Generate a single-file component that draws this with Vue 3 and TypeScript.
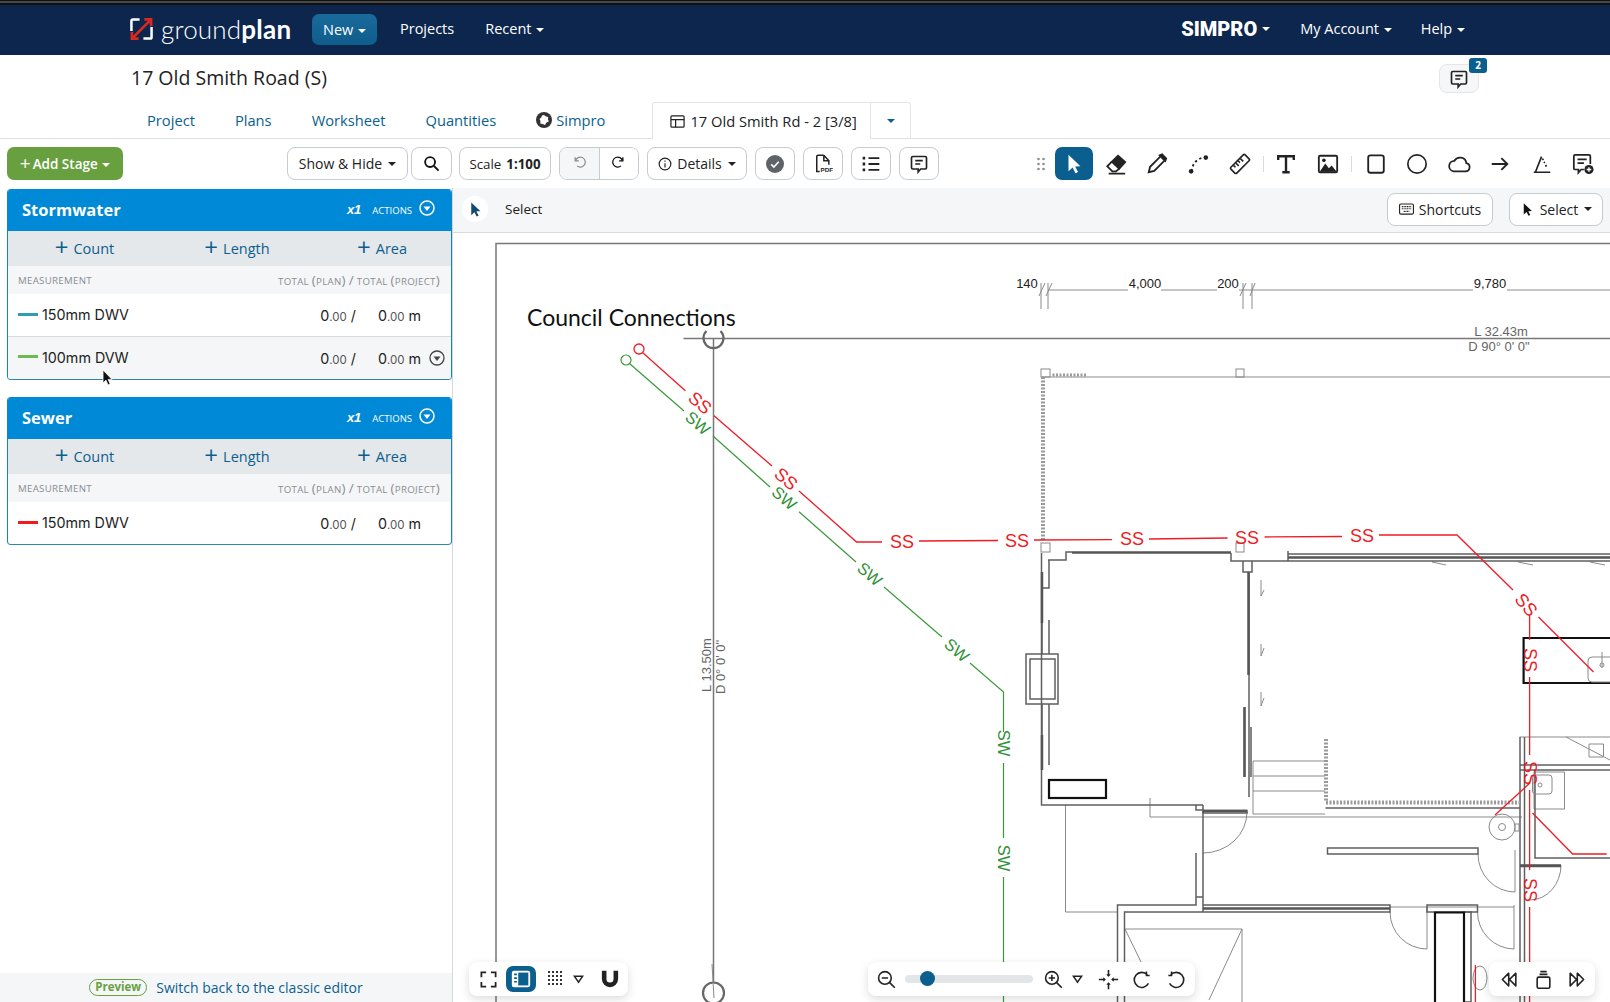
<script setup lang="ts">
interface Stage {
  name: string;
  rows: { name: string; color: string; hover?: boolean }[];
}
interface Label {
  t: string;
  x: number;
  y: number;
  r: number;
}

const tabs = ['Project', 'Plans', 'Worksheet', 'Quantities'];

const stages: Stage[] = [
  {
    name: 'Stormwater',
    rows: [
      { name: '150mm DWV', color: '#2f9bb5' },
      { name: '100mm DVW', color: '#6dbb4f', hover: true },
    ],
  },
  { name: 'Sewer', rows: [{ name: '150mm DWV', color: '#f01c1c' }] },
];

const redLines = [
  'M642.5 352.5L685.4 390.7',
  'M714 415.7L772 466',
  'M799 491L856.6 542H882',
  'M919 541L998 540.5',
  'M1034 540L1112 539.6',
  'M1149 539L1227.6 538',
  'M1264.6 537L1342 536.5',
  'M1379 535H1457L1513 590',
  'M1538.5 617L1593.5 672',
  'M1529.6 615V640',
  'M1529.6 677V755',
  'M1529.6 790V870',
  'M1529.6 907V1002',
  'M1495 815L1530 783',
  'M1532.5 813L1572.6 854H1606.7',
  'M1475.4 965V1002',
];
const greenLines = [
  'M629.5 363.5L684 411',
  'M713 436L770 487',
  'M799 511.7L856 562',
  'M884 587L942 637',
  'M970 663L1003.5 692V732',
  'M1003.5 763V838',
  'M1003.5 877V1002',
];
const ssLabels: Label[] = [
  { t: 'SS', x: 700, y: 403, r: 41 },
  { t: 'SS', x: 786, y: 479, r: 41 },
  { t: 'SS', x: 902, y: 542, r: 0 },
  { t: 'SS', x: 1017, y: 541, r: 0 },
  { t: 'SS', x: 1132, y: 539, r: 0 },
  { t: 'SS', x: 1247, y: 538, r: 0 },
  { t: 'SS', x: 1362, y: 536, r: 0 },
  { t: 'SS', x: 1526, y: 605, r: 50 },
  { t: 'SS', x: 1529.5, y: 660, r: 90 },
  { t: 'SS', x: 1529.5, y: 773, r: 90 },
  { t: 'SS', x: 1529.5, y: 890, r: 90 },
];
const swLabels: Label[] = [
  { t: 'SW', x: 698, y: 423, r: 41 },
  { t: 'SW', x: 784.5, y: 498, r: 41 },
  { t: 'SW', x: 870, y: 574, r: 41 },
  { t: 'SW', x: 957, y: 650, r: 41 },
  { t: 'SW', x: 1003.5, y: 743, r: 90 },
  { t: 'SW', x: 1003.5, y: 858, r: 90 },
];
</script>

<template>
  <div class="app">
    <div class="strip"></div>
    <nav class="nav">
      <svg class="logo" viewBox="0 0 24 24" width="23" height="24">
        <path d="M10 2H3a1.500 1.500 0 0 0-1.500 1.500V14M14 22h7a1.500 1.500 0 0 0 1.500-1.500V10" fill="none" stroke="#fff" stroke-width="2.600" />
        <path d="M2 22L22 2M2 15v7h7M15 2h7v7" fill="none" stroke="#d9281e" stroke-width="2.800" />
      </svg>
      <span class="brand">ground<b>plan</b></span>
      <button class="nav__new">New <i class="caret"></i></button>
      <a class="nav__link nav__link--projects">Projects</a>
      <a class="nav__link nav__link--recent">Recent <i class="caret"></i></a>
      <span class="simpro">SIMPRO</span><i class="caret caret--simpro"></i>
      <a class="nav__link nav__link--account">My Account <i class="caret"></i></a>
      <a class="nav__link nav__link--help">Help <i class="caret"></i></a>
    </nav>

    <header class="head">
      <div class="head__top">
        <h1 class="head__title">17 Old Smith Road (S)</h1>
        <button class="chat">
          <svg viewBox="0 0 24 24" width="20" height="20" fill="none" stroke="#222" stroke-width="2">
            <path d="M4.500 3h15a1.500 1.500 0 0 1 1.500 1.500v12a1.500 1.500 0 0 1-1.500 1.500H14l-3 3.500V18H4.500A1.500 1.500 0 0 1 3 16.500v-12A1.500 1.500 0 0 1 4.500 3zM7.500 8h9M7.500 12h6" />
          </svg>
          <span class="chat__badge">2</span>
        </button>
      </div>
      <div class="tabs">
        <a v-for="t in tabs" :key="t" class="tabs__item">{{ t }}</a>
        <a class="tabs__item tabs__item--simpro">
          <svg viewBox="0 0 16 16" width="16" height="16">
            <circle cx="8" cy="8" r="8" fill="#333" />
            <path d="M8 3l2 1.500 2.200.5-.2 2.500.8 2-2.300 1L9 13 6.500 12l-2.300-.5.3-2.500L3.500 7l1.800-1.500L6 3.500z" fill="#fff" />
          </svg>
          Simpro
        </a>
        <div class="plan-tab">
          <div class="plan-tab__name">
            <svg viewBox="0 0 16 16" width="15" height="15" fill="none" stroke="#222" stroke-width="1.300">
              <rect x="1" y="2" width="14" height="12" rx="1" />
              <path d="M1 6h14M6 6v8" />
            </svg>
            17 Old Smith Rd - 2 [3/8]
          </div>
          <div class="plan-tab__more"><i class="caret caret--blue"></i></div>
        </div>
      </div>
    </header>

    <div class="toolbar">
      <button class="add-stage"><span class="add-stage__plus">+</span>Add Stage <i class="caret"></i></button>
      <button class="tbtn tbtn--show">Show &amp; Hide <i class="caret caret--dark"></i></button>
      <button class="tbtn tbtn--search">
        <svg viewBox="0 0 24 24" width="17" height="17" fill="none" stroke="#111" stroke-width="2.600">
          <circle cx="10" cy="10" r="7" />
          <path d="M15.500 15.500L22 22" />
        </svg>
      </button>
      <button class="tbtn tbtn--scale">Scale <b>1:100</b></button>
      <div class="tgroup">
        <button class="tgroup__btn tgroup__btn--off">
          <svg viewBox="0 0 24 24" width="15" height="15" fill="none" stroke="#8b8f94" stroke-width="2">
            <path d="M5 5v6h6M5.500 11A8 8 0 1 1 8 19" />
          </svg>
        </button>
        <button class="tgroup__btn">
          <svg viewBox="0 0 24 24" width="15" height="15" fill="none" stroke="#111" stroke-width="2">
            <path d="M19 5v6h-6M18.500 11A8 8 0 1 0 16 19" />
          </svg>
        </button>
      </div>
      <button class="tbtn tbtn--details">
        <svg viewBox="0 0 24 24" width="14" height="14" fill="none" stroke="#222" stroke-width="2">
          <circle cx="12" cy="12" r="10" />
          <path d="M12 10.500V18M12 6v2" />
        </svg>
        Details <i class="caret caret--dark"></i>
      </button>
      <button class="tbtn tbtn--icon tbtn--check">
        <svg viewBox="0 0 24 24" width="18" height="18">
          <circle cx="12" cy="12" r="12" fill="#5f6368" />
          <path d="M7 12.500l3.500 3.500L17 9" fill="none" stroke="#fff" stroke-width="2.200" />
        </svg>
      </button>
      <button class="tbtn tbtn--icon tbtn--pdf">
        <svg viewBox="0 0 24 24" width="20" height="22" fill="none" stroke="#222" stroke-width="1.800">
          <path d="M13 1.500H6A1.500 1.500 0 0 0 4.500 3v18H8" />
          <path d="M13 1.500V8h6v5M13 1.500L19 8" />
          <text x="9" y="22" class="pdf-text">PDF</text>
        </svg>
      </button>
      <button class="tbtn tbtn--icon tbtn--list">
        <svg viewBox="0 0 24 24" width="20" height="20" fill="none" stroke="#222" stroke-width="2.200">
          <path d="M9 5h13M9 12h13M9 19h13" />
          <path d="M2 5h3M2 12h3M2 19h3" stroke-width="3.400" />
        </svg>
      </button>
      <button class="tbtn tbtn--icon tbtn--note">
        <svg viewBox="0 0 24 24" width="20" height="20" fill="none" stroke="#222" stroke-width="2">
          <path d="M4.500 3h15a1.500 1.500 0 0 1 1.500 1.500v12a1.500 1.500 0 0 1-1.500 1.500H14l-3 3.500V18H4.500A1.500 1.500 0 0 1 3 16.500v-12A1.500 1.500 0 0 1 4.500 3zM7.500 8h9M7.500 12h6" />
        </svg>
      </button>

      <div class="tools">
        <svg class="tools__drag" viewBox="0 0 8 14" width="8" height="14" fill="#8a8f94">
          <circle cx="1.500" cy="2" r="1.300" /><circle cx="6.500" cy="2" r="1.300" />
          <circle cx="1.500" cy="7" r="1.300" /><circle cx="6.500" cy="7" r="1.300" />
          <circle cx="1.500" cy="12" r="1.300" /><circle cx="6.500" cy="12" r="1.300" />
        </svg>
        <button class="tool tool--active">
          <svg viewBox="0 0 24 24" width="24" height="24" fill="#fff"><path d="M6 2v18l4.500-4.200 3.100 6.200 2.800-1.300-3.100-6.100 5.700-.2z" /></svg>
        </button>
        <button class="tool">
          <svg viewBox="0 0 24 24" fill="none" stroke="#222" stroke-width="2">
            <path d="M14.200 3L22 10l-6.500 7-8-7.500z" fill="#222" />
            <path d="M7.500 9.500l-5 5L8 20h4l3.500-3M4 22.500h18" />
          </svg>
        </button>
        <button class="tool">
          <svg viewBox="0 0 24 24" fill="none" stroke="#222" stroke-width="2">
            <path d="M3 21l1.500-6L16 3.500 20.500 8 9 19.500z" />
            <path d="M15 2.500l2.500-1L22 6l-1 2.500z" fill="#222" />
          </svg>
        </button>
        <button class="tool">
          <svg viewBox="0 0 24 24" fill="none" stroke="#222" stroke-width="2">
            <path d="M5 20C6 11 11 6 19 5" stroke-dasharray="2.500 3" />
            <circle cx="4.500" cy="20" r="2.500" fill="#222" stroke="none" />
            <circle cx="20.500" cy="5" r="2.500" fill="#222" stroke="none" />
          </svg>
        </button>
        <button class="tool">
          <svg viewBox="0 0 24 24" fill="none" stroke="#222" stroke-width="1.800">
            <g transform="rotate(-45 12 12)">
              <rect x="1" y="7.500" width="22" height="9" rx="1.500" />
              <path d="M6 8v3M9.500 8v4.500M13 8v3M16.500 8v4.500" />
            </g>
          </svg>
        </button>
        <i class="tools__sep tools__sep--a"></i>
        <button class="tool">
          <svg viewBox="0 0 24 24" fill="none" stroke="#222" stroke-width="2.600">
            <path d="M3.500 7.500V3.500h17v4M12 3.500V21M8 21h8" />
          </svg>
        </button>
        <button class="tool">
          <svg viewBox="0 0 24 24" fill="none" stroke="#222" stroke-width="2">
            <rect x="2" y="3" width="20" height="18" rx="1.500" />
            <path d="M3 20.500l6-9 4 5 3-3 5.500 7z" fill="#222" stroke="none" />
            <circle cx="7.500" cy="8" r="2" fill="#222" stroke="none" />
          </svg>
        </button>
        <i class="tools__sep tools__sep--b"></i>
        <button class="tool">
          <svg viewBox="0 0 24 24" fill="none" stroke="#222" stroke-width="2"><rect x="3.500" y="2.500" width="17" height="19" rx="2.500" /></svg>
        </button>
        <button class="tool">
          <svg viewBox="0 0 24 24" fill="none" stroke="#222" stroke-width="1.800"><circle cx="12" cy="12" r="10" /></svg>
        </button>
        <button class="tool">
          <svg class="tool__wide" viewBox="0 0 26 24" fill="none" stroke="#222" stroke-width="1.900">
            <path d="M7 20h13a4.500 4.500 0 0 0 1-8.900A7 7 0 0 0 8 8.500 5.800 5.800 0 0 0 7 20z" />
          </svg>
        </button>
        <button class="tool">
          <svg viewBox="0 0 24 24" fill="none" stroke="#222" stroke-width="2"><path d="M3 12h17M13.500 5.500L20 12l-6.500 6.500" /></svg>
        </button>
        <button class="tool">
          <svg viewBox="0 0 24 24" fill="none" stroke="#222" stroke-width="1.800">
            <path d="M3 21h18M5 20.500L11.500 4" />
            <path d="M12.500 6l2.500 5M16 13l1 2.500" stroke-dasharray="2 2" />
          </svg>
        </button>
        <button class="tool">
          <svg viewBox="0 0 24 24" fill="none" stroke="#222" stroke-width="1.900">
            <path d="M13 18H10l-3 3.500V18H3.500A1.500 1.500 0 0 1 2 16.500v-13A1.500 1.500 0 0 1 3.500 2h15A1.500 1.500 0 0 1 20 3.500V12M6 7h10M6 11h7" />
            <circle cx="18.500" cy="18" r="5" fill="#222" stroke="none" />
            <path d="M18.500 15.500v5M16 18h5" stroke="#fff" stroke-width="1.500" />
          </svg>
        </button>
      </div>
    </div>

    <div class="main">
      <aside class="side">
        <div class="side__stages">
          <section v-for="s in stages" :key="s.name" class="stage">
            <div class="stage__head">
              <span class="stage__name">{{ s.name }}</span>
              <em class="stage__qty">x1</em>
              <span class="stage__actions">ACTIONS</span>
              <svg class="stage__chev" viewBox="0 0 16 16" width="16" height="16" fill="none" stroke="#fff" stroke-width="1.500">
                <circle cx="8" cy="8" r="7" />
                <path d="M4.500 6.500h7L8 11z" fill="#fff" stroke="none" />
              </svg>
            </div>
            <div class="stage__add">
              <a class="stage__addbtn"><span class="stage__plus">+</span>Count</a>
              <a class="stage__addbtn"><span class="stage__plus">+</span>Length</a>
              <a class="stage__addbtn"><span class="stage__plus">+</span>Area</a>
            </div>
            <div class="stage__cols">
              <span>MEASUREMENT</span>
              <span>TOTAL <span class="stage__paren">(</span>PLAN<span class="stage__paren">)</span> <span class="stage__paren">/</span> TOTAL <span class="stage__paren">(</span>PROJECT<span class="stage__paren">)</span></span>
            </div>
            <div v-for="r in s.rows" :key="r.name" class="row" :class="{ 'row--hover': r.hover }">
              <i class="row__swatch" :style="{ background: r.color }"></i>
              <span class="row__name">{{ r.name }}</span>
              <span class="row__plan">0<small>.00</small> /</span>
              <span class="row__project">0<small>.00</small> m</span>
              <span class="row__act">
                <svg v-if="r.hover" viewBox="0 0 16 16" width="16" height="16" fill="none" stroke="#444" stroke-width="1.300">
                  <circle cx="8" cy="8" r="7" />
                  <path d="M4.500 6.500h7L8 11z" fill="#444" stroke="none" />
                </svg>
              </span>
            </div>
          </section>
        </div>
        <div class="side__foot">
          <span class="pill">Preview</span>
          <a class="side__back">Switch back to the classic editor</a>
        </div>
        <svg class="mouse" viewBox="0 0 12 18" width="12" height="18">
          <path d="M1 1v13l3-2.800 2 4.800 2.200-1-2-4.600H10z" fill="#111" stroke="#fff" stroke-width=".8" />
        </svg>
      </aside>

      <div class="work">
        <div class="work__bar">
          <span class="work__round">
            <svg viewBox="0 0 24 24" width="17" height="17" fill="#14496f"><path d="M6 2v18l4.500-4.200 3.100 6.200 2.800-1.300-3.100-6.100 5.700-.2z" /></svg>
          </span>
          <span class="work__mode">Select</span>
          <button class="tbtn tbtn--shortcuts">
            <svg viewBox="0 0 16 12" width="15" height="12" fill="none" stroke="#222" stroke-width="1.200">
              <rect x=".6" y=".6" width="14.800" height="10.800" rx="1.500" />
              <path d="M3 3.500h10M3 5.700h10M5 8.500h6" stroke-dasharray="1.200 .6" />
            </svg>
            Shortcuts
          </button>
          <button class="tbtn tbtn--select">
            <svg viewBox="0 0 24 24" width="15" height="15" fill="#111"><path d="M6 2v18l4.500-4.200 3.100 6.200 2.800-1.300-3.100-6.100 5.700-.2z" /></svg>
            Select <i class="caret caret--dark"></i>
          </button>
        </div>

        <div class="canvas">
          <svg class="plan" viewBox="453 233 1157 769" width="1157" height="769">
            <g class="d-sheet">
              <path d="M496 1002V243.500H1610" />
              <path d="M683.500 338.500H1610M713.500 338.500V982" />
              <path class="d-ring" d="M706.500 331A10 10 0 1 0 720.500 331" />
              <circle class="d-ring" cx="713.500" cy="993" r="10.500" />
              <path d="M712 964L714 998" class="d-thin" />
            </g>
            <text x="527" y="326" class="t-council">Council Connections</text>
            <text x="1501" y="336" class="t-sur">L 32.43m</text>
            <text x="1499" y="351" class="t-sur">D 90° 0' 0"</text>
            <text transform="rotate(-90 706 665)" x="706" y="670" class="t-sur">L 13.50m</text>
            <text transform="rotate(-90 720 667)" x="720" y="672" class="t-sur">D 0° 0' 0"</text>

            <g class="d-thin">
              <path d="M1048 290H1128M1161 290H1217M1239 290H1473M1507 290H1610" />
              <path d="M1041 283V309M1048 283V309M1243 283V309M1252 283V309" />
              <path d="M1039 296L1045 283M1046 296L1052 283M1240 296L1246 283M1250 296L1255 283" />
            </g>
            <text x="1027" y="288" class="t-dim">140</text>
            <text x="1145" y="288" class="t-dim">4,000</text>
            <text x="1228" y="288" class="t-dim">200</text>
            <text x="1490" y="288" class="t-dim">9,780</text>

            <!-- building -->
            <g class="d-thin">
              <rect x="1041" y="369" width="9" height="8" />
              <rect x="1236" y="369" width="8" height="8" />
              <rect x="1041" y="543" width="9" height="9" />
              <rect x="1236" y="543" width="8" height="9" />
              <path d="M1041 377H1610" />
              <path d="M1150 798V817H1522M1065.500 805V912H1117M1253 761V814H1325M1253 761H1325M1253 776H1325M1253 791H1325" />
              <path d="M1125 929H1242V1002M1125 929L1141 962M1242 929L1209 1000" />
              <path d="M1247 812A44 41 0 0 1 1203 853M1478 854A37 38 0 0 0 1515 892M1515 850V892M1390 912A37 37 0 0 0 1427 949M1427 907V949M1477.500 912A37 37 0 0 0 1514 949M1514 905V949M1561 865A31 35 0 0 1 1530 900" />
              <path d="M1390 907H1514" />
              <path d="M1519.500 737H1610M1566 737L1610 760M1589 744H1603.500V757H1589zM1534 772H1564.500V809H1534z" />
              <path d="M1261 644V656L1264 648M1261 692V706L1264 698M1261 580V596L1264 590M1432 562L1446 565M1518 562L1533 565M1590 562L1605 565" />
            </g>
            <g class="d-wall">
              <path d="M1041.500 553V805H1203M1049 560V588H1041.500M1048 560H1066V552H1072" />
              <path d="M1231 553V561H1288M1243 561V572H1252V561M1249 572V797" />
              <path d="M1288 554H1610M1288 561H1610M1288 551V561" />
              <rect x="1026" y="654" width="32" height="50" />
              <rect x="1030" y="659" width="25" height="40" />
              <path d="M1042 654V620M1049 654V620M1042 704V765M1049 704V765" />
              <path d="M1203 805V912M1196 853V897H1203M1196 897V905H1117.500V1002M1124.500 1002V912H1203" />
              <path d="M1203 905H1390V912H1203M1390 905V912M1427 905H1477.500V912H1427z" />
              <path d="M1196 805V810H1203M1203 810.500H1247V813H1203z" />
              <path d="M1327.500 848H1478V854H1327.500z" />
              <path d="M1520 737V1002M1524.500 737V1002M1535 770V858H1610M1520 765H1610M1520 770H1610M1520 865H1561" />
              <path d="M1244.500 707V777M1251 727V777" />
              <rect x="1464" y="912" width="7" height="90" />
              <path d="M1325.500 808H1520" />
            </g>
            <path class="d-dash" d="M1043 377V540" />
            <path class="d-dash d-dash--small" d="M1052.500 375H1086" />
            <path class="d-dash" d="M1326 739V802" />
            <path class="d-dash" d="M1326 802.500H1520" />
            <g class="d-thick">
              <path d="M1072 552.500H1231M1203 811H1247M1288 557.500H1610M1520 866H1561M1203 908.500H1390M1042 572V623M1042 735V770M1248.500 572V675M1244.500 707V777" />
            </g>
            <g class="d-black">
              <rect x="1049" y="780" width="57" height="18" />
              <path d="M1610 638H1523.600V683H1610" />
              <path d="M1435 1002V912.500H1464V1002" />
            </g>
            <g class="d-thin d-fix">
              <rect x="1588" y="657" width="30" height="25" rx="4" />
              <path d="M1602 652V668" />
              <circle cx="1602" cy="665" r="2" />
              <rect x="1532.500" y="775" width="19.500" height="19" rx="3" />
              <circle cx="1540" cy="785" r="2" />
              <circle cx="1502" cy="827" r="13" />
              <circle cx="1502" cy="827" r="3.500" />
              <rect x="1515" y="824" width="4" height="7" />
              <ellipse cx="1480" cy="978" rx="7" ry="12" />
            </g>

            <g class="d-red">
              <circle cx="639" cy="349" r="5" />
              <path v-for="d in redLines" :key="d" :d="d" />
            </g>
            <g class="d-green">
              <circle cx="626" cy="360" r="5" />
              <path v-for="d in greenLines" :key="d" :d="d" />
            </g>
            <text v-for="l in ssLabels" :key="l.x + '-' + l.y" class="t-ss" :x="l.x" :y="l.y" :transform="`rotate(${l.r} ${l.x} ${l.y})`">{{ l.t }}</text>
            <text v-for="l in swLabels" :key="l.x + '-' + l.y" class="t-sw" :x="l.x" :y="l.y" :transform="`rotate(${l.r} ${l.x} ${l.y})`">{{ l.t }}</text>
          </svg>

          <div class="float float--left">
            <svg class="float__i" viewBox="0 0 24 24" fill="none" stroke="#222" stroke-width="2.200">
              <path d="M9 3H3v6M15 3h6v6M9 21H3v-6M15 21h6v-6" />
            </svg>
            <span class="float__on">
              <svg viewBox="0 0 24 24" width="22" height="22">
                <rect x="2" y="3" width="20" height="18" rx="2.500" fill="#fff" />
                <rect x="9" y="5" width="11" height="14" fill="#0b5f8e" />
                <path d="M4.500 7h3M4.500 11h3M4.500 15h3" stroke="#0b5f8e" stroke-width="1.800" />
              </svg>
            </span>
            <svg class="float__i float__i--grid" viewBox="0 0 18 18" fill="#333">
              <path d="M1 1h2v2H1zM5 1h2v2H5zM9 1h2v2H9zM13 1h2v2h-2zM1 5h2v2H1zM5 5h2v2H5zM9 5h2v2H9zM13 5h2v2h-2zM1 9h2v2H1zM5 9h2v2H5zM9 9h2v2H9zM13 9h2v2h-2zM1 13h2v2H1zM5 13h2v2H5zM9 13h2v2H9zM13 13h2v2h-2z" />
            </svg>
            <svg class="float__tri" viewBox="0 0 12 9" fill="none" stroke="#222" stroke-width="1.600"><path d="M1.500 1h9L6 7.500z" /></svg>
            <svg class="float__i float__i--magnet" viewBox="0 0 24 24" fill="none" stroke="#222" stroke-width="5.500">
              <path d="M5 2v10a7 7 0 0 0 14 0V2" />
            </svg>
          </div>

          <div class="float float--zoom">
            <svg class="float__i" viewBox="0 0 24 24" fill="none" stroke="#222" stroke-width="2">
              <circle cx="10" cy="10" r="8" /><path d="M16 16l6.500 6.500M6 10h8" />
            </svg>
            <div class="slider"><i class="slider__thumb"></i></div>
            <svg class="float__i" viewBox="0 0 24 24" fill="none" stroke="#222" stroke-width="2">
              <circle cx="10" cy="10" r="8" /><path d="M16 16l6.500 6.500M6 10h8M10 6v8" />
            </svg>
            <svg class="float__tri" viewBox="0 0 12 9" fill="none" stroke="#222" stroke-width="1.600"><path d="M1.500 1h9L6 7.500z" /></svg>
            <svg class="float__i float__i--fit" viewBox="0 0 24 24" fill="none" stroke="#222" stroke-width="1.800">
              <path d="M12 1v7M12 16v7M1 12h7M16 12h7" />
              <path d="M9.500 6L12 9l2.500-3zM9.500 18l2.500-3 2.500 3zM6 9.500L9 12l-3 2.500zM18 9.500L15 12l3 2.500z" fill="#222" stroke="none" />
            </svg>
            <svg class="float__i float__i--rot" viewBox="0 0 24 24" fill="none" stroke="#222" stroke-width="2">
              <path d="M18 6a9.500 9.500 0 1 0 1.500 11M17 2v5h4" />
            </svg>
            <svg class="float__i float__i--rot" viewBox="0 0 24 24" fill="none" stroke="#222" stroke-width="2">
              <path d="M6 6a9.500 9.500 0 1 1-1.500 11M7 2v5H3" />
            </svg>
          </div>

          <div class="float float--pages">
            <svg class="float__i" viewBox="0 0 24 24" fill="none" stroke="#222" stroke-width="2" stroke-linejoin="round">
              <path d="M11 4L3 12l8 8zM20 4l-8 8 8 8z" />
            </svg>
            <svg class="float__i" viewBox="0 0 24 24" fill="none" stroke="#222" stroke-width="2">
              <rect x="4" y="9" width="16" height="14" rx="2" />
              <path d="M7 5.500h10M8 2h8" />
            </svg>
            <svg class="float__i" viewBox="0 0 24 24" fill="none" stroke="#222" stroke-width="2" stroke-linejoin="round">
              <path d="M4 4l8 8-8 8zM13 4l8 8-8 8z" />
            </svg>
          </div>
        </div>
      </div>
    </div>
  </div>
</template>

<style scoped>
.app {
  width: 1610px;
  height: 1002px;
  display: flex;
  flex-direction: column;
  overflow: hidden;
  position: relative;
  background: #fff;
  color: #222;
  font-family: "Open Sans", "Liberation Sans", sans-serif;
}

button {
  font-family: inherit;
  cursor: pointer;
}

.strip {
  height: 5px;
  background: linear-gradient(#111 0 1px, #484848 1px 3px, #111 3px);
}

.caret {
  display: inline-block;
  width: 0;
  height: 0;
  margin-left: 1px;
  vertical-align: 2px;
  border-left: 4px solid transparent;
  border-right: 4px solid transparent;
  border-top: 4px solid #fff;
}
.caret--dark {
  border-top-color: #222;
}
.caret--blue {
  border-top-color: #0b5f8e;
}

.nav {
  height: 50px;
  display: flex;
  align-items: center;
  padding: 0 0 3px 130px;
  box-sizing: border-box;
  background: #0d264e;
  color: #fff;
  font-size: 14.5px;
}
.logo {
  margin-right: 8px;
}
.brand {
  width: 151px;
  font-family: Lato, sans-serif;
  font-size: 26px;
  font-weight: 300;
  letter-spacing: 0.2px;
}
.brand b {
  font-weight: 700;
}
.nav__new {
  width: 65px;
  height: 31px;
  margin-top: 1px;
  border: 0;
  border-radius: 7px;
  background: linear-gradient(#1a6a9c, #0e5d8c);
  color: #fff;
  font-size: 14.5px;
  font-weight: 500;
}
.nav__link {
  font-weight: 500;
  white-space: nowrap;
}
.nav__link--projects {
  margin-left: 23px;
}
.nav__link--recent {
  margin-left: 31px;
}
.simpro {
  margin-left: 637px;
  font-family: Roboto, sans-serif;
  font-size: 20px;
  font-weight: 900;
}
.caret--simpro {
  margin-left: 5px;
}
.nav__link--account {
  margin-left: 30px;
}
.nav__link--help {
  margin-left: 29px;
}

.head {
  height: 84px;
  display: flex;
  flex-direction: column;
  justify-content: space-between;
  border-bottom: 1px solid #dfe2e5;
  box-sizing: border-box;
}
.head__top {
  display: flex;
  align-items: flex-start;
  justify-content: space-between;
  padding: 9px 131px 0;
}
.head__title {
  margin: 0;
  font-size: 19.5px;
  font-weight: 500;
  line-height: 28px;
}
.chat {
  position: relative;
  width: 40px;
  height: 29px;
  border: 1px solid #e3e5e8;
  border-radius: 8px;
  background: #f6f7f8;
  display: flex;
  align-items: center;
  justify-content: center;
  padding: 0;
}
.chat__badge {
  position: absolute;
  top: -7px;
  right: -9px;
  width: 18px;
  height: 15px;
  border-radius: 3px;
  background: #0b5f8e;
  color: #fff;
  font-size: 10px;
  font-weight: 700;
  line-height: 15px;
  text-align: center;
}
.tabs {
  display: flex;
  align-items: flex-end;
  padding-left: 147px;
  height: 36px;
  font-size: 14.7px;
}
.tabs__item {
  margin-right: 40px;
  padding-bottom: 8px;
  color: #0b5f8e;
  font-weight: 500;
  white-space: nowrap;
}
.tabs__item--simpro {
  display: flex;
  align-items: center;
  gap: 4px;
  margin-left: 0;
  margin-right: 47px;
}
.plan-tab {
  display: flex;
  height: 36px;
  margin-bottom: -1px;
  border: 1px solid #e3e5e8;
  border-bottom: 0;
  border-radius: 3px 3px 0 0;
  background: #fff;
}
.plan-tab__name {
  display: flex;
  align-items: center;
  gap: 5px;
  width: 218px;
  padding-left: 17px;
  box-sizing: border-box;
  border-right: 1px solid #e3e5e8;
  font-size: 14.7px;
  font-weight: 500;
  white-space: nowrap;
}
.plan-tab__more {
  width: 39px;
  display: flex;
  align-items: center;
  justify-content: center;
  border-bottom: 1px solid #dfe2e5;
}

.toolbar {
  height: 49px;
  flex-shrink: 0;
  display: flex;
  align-items: center;
  padding-left: 7px;
  box-sizing: border-box;
}
.add-stage {
  width: 116px;
  height: 33px;
  border: 0;
  border-radius: 7px;
  background: #68a040;
  color: #fff;
  font-size: 13.5px;
  font-weight: 600;
  white-space: nowrap;
  padding: 0;
}
.add-stage__plus {
  font-size: 19px;
  font-weight: 400;
  line-height: 1;
  vertical-align: -1px;
  margin-right: 2px;
}
.tbtn {
  height: 33px;
  display: inline-flex;
  align-items: center;
  justify-content: center;
  gap: 5px;
  padding: 0;
  border: 1px solid #c6cbd1;
  border-radius: 8px;
  background: #fff;
  color: #222;
  font-size: 14px;
  font-weight: 500;
  white-space: nowrap;
  box-sizing: border-box;
}
.tbtn--show {
  width: 121px;
  margin-left: 164px;
}
.tbtn--search {
  width: 41px;
  margin-left: 3px;
}
.tbtn--scale {
  width: 92px;
  margin-left: 7px;
  font-size: 13.3px;
}
.tbtn--scale b {
  font-weight: 700;
}
.tgroup {
  width: 80px;
  height: 33px;
  margin-left: 8px;
  display: flex;
  border: 1px solid #c6cbd1;
  border-radius: 8px;
  box-sizing: border-box;
  overflow: hidden;
}
.tgroup__btn {
  flex: 1;
  border: 0;
  background: #fff;
  padding: 0;
}
.tgroup__btn--off {
  background: #f5f6f8;
  border-right: 1px solid #c6cbd1;
}
.tbtn--details {
  width: 100px;
  margin-left: 8px;
}
.tbtn--icon {
  width: 40px;
  margin-left: 8px;
}

.tools {
  display: flex;
  align-items: center;
  margin-left: 98px;
}
.tools__drag {
  margin-right: 10px;
}
.tool {
  width: 41.4px;
  height: 33px;
  display: flex;
  align-items: center;
  justify-content: center;
  border: 0;
  background: none;
  padding: 0;
}
.tool svg {
  width: 22px;
  height: 22px;
}
.tool .tool__wide {
  width: 26px;
}
.tool--active {
  width: 38px;
  margin-right: 2px;
  border-radius: 7px;
  background: #0b5f8e;
}
.tools__sep {
  width: 1px;
  height: 16px;
  background: #d8dbde;
}
.tools__sep--a {
  margin: 0 2px;
}
.tools__sep--b {
  margin: 0 3px;
}
.pdf-text {
  font-family: "Liberation Sans", sans-serif;
  font-size: 7.5px;
  font-weight: 700;
  fill: #222;
  stroke: none;
}

.main {
  flex: 1;
  display: flex;
  min-height: 0;
}
.side {
  position: relative;
  width: 453px;
  flex-shrink: 0;
  display: flex;
  flex-direction: column;
  border-right: 1px solid #d5d8db;
  box-sizing: border-box;
}
.side__stages {
  flex: 1;
  padding: 1px 0 0 7px;
}
.stage {
  width: 445px;
  margin-bottom: 17px;
  border: 1px solid #0b86cf;
  border-top: 0;
  border-bottom-color: #2c86ad;
  border-radius: 4px;
  box-sizing: border-box;
  overflow: hidden;
  background: #fff;
}
.stage__head {
  height: 42px;
  display: flex;
  align-items: center;
  margin: 0 -1px;
  padding: 0 0 2px 15px;
  box-sizing: border-box;
  background: #0089d6;
  color: #fff;
}
.stage__name {
  flex: 1;
  font-size: 16.5px;
  font-weight: 700;
}
.stage__qty {
  margin-right: 11px;
  font-family: "Liberation Sans", sans-serif;
  font-size: 13px;
  font-weight: 700;
}
.stage__actions {
  margin-right: 7px;
  margin-top: 3px;
  font-size: 9.5px;
  font-weight: 500;
}
.stage__chev {
  margin-right: 17px;
  margin-top: -3px;
}
.stage__add {
  height: 35px;
  display: grid;
  grid-template-columns: 153px 152px 1fr;
  padding-bottom: 1px;
  box-sizing: border-box;
  background: #e5e8eb;
}
.stage__addbtn {
  display: flex;
  align-items: center;
  justify-content: center;
  gap: 5px;
  color: #0b5f8e;
  font-size: 14.5px;
  font-weight: 500;
}
.stage__plus {
  font-size: 24px;
  font-weight: 400;
  line-height: 1;
  margin-top: -3px;
}
.stage__cols {
  height: 28px;
  display: flex;
  align-items: center;
  justify-content: space-between;
  padding: 0 11px 0 10px;
  background: #f5f6f8;
  color: #8a8d91;
  font-size: 9.7px;
  letter-spacing: 0.3px;
}
.stage__paren {
  font-size: 13.5px;
}
.row {
  height: 42px;
  display: flex;
  align-items: center;
  padding-left: 10px;
  border-top: 1px solid transparent;
  box-sizing: border-box;
  font-family: Inter, sans-serif;
  font-size: 14.3px;
  color: #222;
}
.row--hover {
  height: 43px;
  background: #f5f6f8;
  border-top-color: #d8dbde;
}
.row__swatch {
  width: 20px;
  height: 3px;
  margin-right: 4px;
  margin-top: -3px;
}
.row__name {
  flex: 1;
  margin-top: -2px;
}
.row__plan {
  white-space: nowrap;
}
.row__project {
  width: 65px;
  text-align: right;
  white-space: nowrap;
}
.row small {
  font-size: 11.5px;
  color: #555;
}
.row__act {
  width: 30px;
  display: flex;
  justify-content: center;
  padding-left: 2px;
  box-sizing: border-box;
}
.side__foot {
  height: 29px;
  flex-shrink: 0;
  display: flex;
  align-items: center;
  justify-content: center;
  gap: 9px;
  background: #f4f6f8;
}
.pill {
  padding: 0 5px;
  height: 15px;
  line-height: 14px;
  border: 1px solid #68a040;
  border-radius: 9px;
  color: #68a040;
  font-size: 11.5px;
  font-weight: 700;
}
.side__back {
  color: #0b5f8e;
  font-size: 14px;
  font-weight: 500;
}
.mouse {
  position: absolute;
  left: 102px;
  top: 181px;
}

.work {
  flex: 1;
  min-width: 0;
  display: flex;
  flex-direction: column;
}
.work__bar {
  height: 45px;
  flex-shrink: 0;
  display: flex;
  align-items: center;
  padding: 0 7px 2px 9px;
  background: #f5f6f8;
  border-bottom: 1px solid #d8dbde;
  box-sizing: border-box;
}
.work__round {
  width: 26px;
  height: 26px;
  display: flex;
  align-items: center;
  justify-content: center;
  border-radius: 50%;
  background: #fff;
}
.work__mode {
  flex: 1;
  margin-left: 17px;
  font-size: 13.5px;
  font-weight: 500;
}
.tbtn--shortcuts {
  width: 106px;
}
.tbtn--select {
  width: 94px;
  margin-left: 16px;
}
.canvas {
  position: relative;
  flex: 1;
  min-height: 0;
  background: #fff;
  overflow: hidden;
}
.plan {
  position: absolute;
  inset: 0;
}
.plan path,
.plan rect,
.plan circle,
.plan ellipse {
  fill: none;
}
.d-sheet {
  stroke: #777;
  stroke-width: 1.5;
}
.d-sheet .d-ring {
  stroke: #666;
  stroke-width: 2.2;
}
.d-sheet .d-thin {
  stroke-width: 1;
}
.d-thin {
  stroke: #8a8a8a;
  stroke-width: 1;
}
.d-wall {
  stroke: #5f5f5f;
  stroke-width: 1.5;
}
.d-thick {
  stroke: #555;
  stroke-width: 2.5;
}
.d-black {
  stroke: #111;
  stroke-width: 2.2;
}
.d-dash {
  stroke: #9a9a9a;
  stroke-width: 4;
  stroke-dasharray: 2 1.5;
}
.d-dash--small {
  stroke-width: 3;
}
.d-red {
  stroke: #ee1c25;
  stroke-width: 1.3;
}
.d-green {
  stroke: #3a9a3a;
  stroke-width: 1.2;
}
.t-council {
  font-family: Lato, sans-serif;
  font-size: 23px;
  fill: #111;
}
.t-sur {
  font-family: "Liberation Sans", sans-serif;
  font-size: 13px;
  fill: #666;
  text-anchor: middle;
}
.t-dim {
  font-family: "Liberation Sans", sans-serif;
  font-size: 13px;
  fill: #222;
  text-anchor: middle;
}
.t-ss,
.t-sw {
  font-family: "Liberation Sans", sans-serif;
  text-anchor: middle;
  dominant-baseline: central;
}
.t-ss {
  font-size: 18px;
  fill: #ee1c25;
}
.t-sw {
  font-size: 16.5px;
  fill: #2f8f35;
}

.float {
  position: absolute;
  top: 729px;
  height: 34px;
  display: flex;
  align-items: center;
  border-radius: 8px;
  background: #fff;
  box-shadow: 0 3px 10px rgba(0, 0, 0, 0.14);
  box-sizing: border-box;
}
.float__i {
  width: 19px;
  height: 19px;
  flex-shrink: 0;
}
.float__tri {
  width: 11px;
  height: 9px;
  flex-shrink: 0;
}
.float--left {
  left: 16px;
  width: 159px;
  padding-left: 10px;
}
.float__on {
  width: 30px;
  height: 26px;
  margin-left: 8px;
  display: flex;
  align-items: center;
  justify-content: center;
  border-radius: 7px;
  background: #0b5f8e;
}
.float__i--grid {
  margin-left: 11px;
  width: 18px;
  height: 18px;
}
.float--left .float__tri {
  margin-left: 8px;
}
.float__i--magnet {
  margin-left: 16px;
  width: 20px;
  height: 20px;
}
.float--zoom {
  left: 415px;
  width: 327px;
  padding-left: 9px;
}
.slider {
  position: relative;
  width: 128px;
  height: 8px;
  margin: 0 11px 0 9px;
  border-radius: 4px;
  background: #e3e6e9;
}
.slider__thumb {
  position: absolute;
  left: 15px;
  top: -4px;
  width: 15px;
  height: 15px;
  border-radius: 50%;
  background: #0b5f8e;
}
.float--zoom .float__tri {
  margin-left: 9px;
}
.float__i--fit {
  margin-left: 15px;
  width: 21px;
  height: 21px;
}
.float__i--rot {
  margin-left: 14px;
}
.float--pages {
  left: 1036px;
  width: 106px;
  padding: 0 9px 0 11px;
  justify-content: space-between;
}
</style>
